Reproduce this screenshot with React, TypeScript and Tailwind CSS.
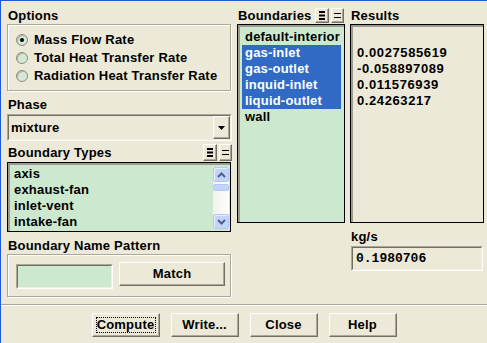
import React from "react";

const raised =
  "bg-[#ECE9D8] border border-t-white border-l-white border-b-[#716F64] border-r-[#716F64] shadow-[inset_-1px_-1px_0_#ACA899]";

function Etched({ className = "", children }: { className?: string; children?: React.ReactNode }) {
  return (
    <div className={`border border-[#ACA899] shadow-[inset_1px_1px_0_#fff,1px_1px_0_#fff] ${className}`}>
      {children}
    </div>
  );
}

function Sunken({ className = "", inner = "", children }: { className?: string; inner?: string; children?: React.ReactNode }) {
  return (
    <div className={`border border-t-[#ACA899] border-l-[#ACA899] border-b-white border-r-white ${className}`}>
      <div className={`w-full h-full border border-t-[#716F64] border-l-[#716F64] border-b-[#F1EFE2] border-r-[#F1EFE2] ${inner}`}>
        {children}
      </div>
    </div>
  );
}

function ListBox({ className = "", inner = "", children }: { className?: string; inner?: string; children?: React.ReactNode }) {
  return (
    <div className={`border border-black ${className}`}>
      <div className={`w-full h-full border-t-2 border-l-2 border-t-[#9D9B8F] border-l-[#9D9B8F] ${inner}`}>{children}</div>
    </div>
  );
}

function Radio({ checked, label }: { checked?: boolean; label: string }) {
  return (
    <div className="h-[18px] flex items-center gap-[6px]">
      <div className="w-[12px] h-[12px] rounded-full border border-[#8E8C80] bg-[#D3E8D5] shadow-[inset_1px_1px_0_#B5B3A7] flex items-center justify-center">
        {checked && <div className="w-[4px] h-[4px] rounded-full bg-black" />}
      </div>
      <span className="leading-[16px]">{label}</span>
    </div>
  );
}

function MultiIcon() {
  return (
    <svg width="6" height="9" viewBox="0 0 6 9">
      <rect x="0" y="0" width="6" height="2" fill="#000" />
      <rect x="0" y="3.5" width="6" height="2" fill="#000" />
      <rect x="0" y="7" width="6" height="2" fill="#000" />
    </svg>
  );
}

function EqIcon() {
  return (
    <svg width="7" height="5" viewBox="0 0 7 5">
      <rect x="0" y="0" width="7" height="1" fill="#000" />
      <rect x="0" y="4" width="7" height="1" fill="#000" />
    </svg>
  );
}

function ToolButtons({ h }: { h: string }) {
  return (
    <div className="flex gap-[2px]">
      <div className={`${raised} w-[14px] ${h} flex items-center justify-center`}>
        <MultiIcon />
      </div>
      <div className={`${raised} w-[13px] ${h} flex items-center justify-center`}>
        <EqIcon />
      </div>
    </div>
  );
}

function ScrollBtn({ up }: { up?: boolean }) {
  return (
    <div className="h-[15px] w-full rounded-[2px] border border-[#B4C6F2] bg-[#C3D4FC] shadow-[inset_1px_1px_0_#E6EEFF] flex items-center justify-center">
      <svg width="9" height="6" viewBox="0 0 9 6">
        <path d={up ? "M1 5 L4.5 1.5 L8 5" : "M1 1 L4.5 4.5 L8 1"} stroke="#4D6185" strokeWidth="2" fill="none" />
      </svg>
    </div>
  );
}

function PushButton({ label, focus }: { label: string; focus?: boolean }) {
  return (
    <div className={`${raised} relative w-[68px] h-[24px] flex items-center justify-center`}>
      <span className="leading-[16px]">{label}</span>
      {focus && <div className="absolute inset-[3px] border border-dotted border-black" />}
    </div>
  );
}

export default function App() {
  const boundaries = [
    { n: "default-interior", s: false },
    { n: "gas-inlet", s: true },
    { n: "gas-outlet", s: true },
    { n: "inquid-inlet", s: true },
    { n: "liquid-outlet", s: true },
    { n: "wall", s: false },
  ];
  const results = ["", "0.0027585619", "-0.058897089", "0.011576939", "0.24263217"];
  return (
    <div className="w-[487px] h-[343px] bg-[#ECE9D8] border-t border-l border-[#1F5BD8] box-border overflow-hidden flex flex-col font-['Liberation_Sans',Arial,sans-serif] font-bold text-[13px] text-black tracking-[0.2px]">
      <div className="h-[303px] flex pl-[6px] pt-[6px]">
        {/* Left column */}
        <div className="w-[225px] flex flex-col">
          <div className="h-[17px] flex items-center pl-[1px]">Options</div>
          <Etched className="h-[67px] w-[224px] pt-[6px] pl-[8px]">
            <Radio checked label="Mass Flow Rate" />
            <Radio label="Total Heat Transfer Rate" />
            <Radio label="Radiation Heat Transfer Rate" />
          </Etched>
          <div className="mt-[6px] h-[16px] flex items-center pl-[1px]">Phase</div>
          <Sunken className="mt-[1px] h-[27px] w-[225px]" inner="flex items-center">
            <span className="flex-1 pl-[2px] leading-[16px] font-normal-none">mixture</span>
            <div className={`${raised} w-[17px] h-full flex items-center justify-center`}>
              <svg width="7" height="4" viewBox="0 0 7 4">
                <path d="M0 0 H7 L3.5 4 Z" fill="#000" />
              </svg>
            </div>
          </Sunken>
          <div className="mt-[2px] h-[19px] flex justify-between items-start">
            <span className="pl-[1px] leading-[19px]">Boundary Types</span>
            <div className="mt-[1px]">
              <ToolButtons h="h-[17px]" />
            </div>
          </div>
          <ListBox className="h-[70px] w-[224px]" inner="bg-[#CCE8CF] flex">
            <div className="flex-1 pl-[4px] pt-[1px]">
              {["axis", "exhaust-fan", "inlet-vent", "intake-fan"].map((t) => (
                <div key={t} className="h-[16px] leading-[16px] whitespace-nowrap">
                  {t}
                </div>
              ))}
            </div>
            <div className="w-[16px] mr-[1px] my-[2px] flex flex-col bg-gradient-to-r from-[#F3F1EC] to-[#FEFEFB]">
              <ScrollBtn up />
              <div className="mt-[2px] h-[7px] rounded-[2px] border border-[#B4C6F2] bg-[#C3D4FC]" />
              <div className="flex-1" />
              <ScrollBtn />
            </div>
          </ListBox>
          <div className="mt-[6px] h-[16px] flex items-center pl-[1px]">Boundary Name Pattern</div>
          <Etched className="h-[43px] w-[224px] flex items-start pl-[8px]">
            <Sunken className="mt-[9px] w-[97px] h-[25px]" inner="bg-[#CCE8CF]" />
            <div className="ml-[6px] mt-[7px]">
              <div className={`${raised} w-[106px] h-[24px] flex items-center justify-center`}>Match</div>
            </div>
          </Etched>
        </div>

        {/* Middle column */}
        <div className="ml-[5px] w-[108px] flex flex-col">
          <div className="h-[17px] flex justify-between items-start pr-[1px]">
            <span className="pl-[1px] leading-[17px]">Boundaries</span>
            <div className="mt-[1px]">
              <ToolButtons h="h-[15px]" />
            </div>
          </div>
          <ListBox className="h-[199px]" inner="bg-[#CCE8CF] pt-[2px] pl-[2px] pr-[3px]">
            {boundaries.map((b) => (
              <div
                key={b.n}
                className={`h-[16px] leading-[16px] pl-[3px] whitespace-nowrap ${b.s ? "bg-[#316AC5] text-white" : ""}`}
              >
                {b.n}
              </div>
            ))}
          </ListBox>
        </div>

        {/* Right column */}
        <div className="ml-[5px] w-[134px] flex flex-col">
          <div className="h-[17px] flex items-center pl-[1px]">Results</div>
          <ListBox className="h-[199px]" inner="pt-[2px] pl-[4px]">
            {results.map((r, i) => (
              <div key={i} className="h-[16px] leading-[16px] tracking-[0.6px] whitespace-nowrap">
                {r}
              </div>
            ))}
          </ListBox>
          <div className="mt-[6px] h-[16px] flex items-center pl-[1px]">kg/s</div>
          <Sunken className="mt-[1px] ml-[1px] w-[132px] h-[25px]" inner="flex items-center pl-[3px]">
            <span className="font-['Liberation_Mono',monospace] tracking-normal leading-[16px]">0.1980706</span>
          </Sunken>
        </div>
      </div>

      <div className="h-[2px] border-t border-t-[#ACA899] border-b border-b-white" />

      <div className="flex justify-center gap-[11px] pt-[7px]">
        <PushButton label="Compute" focus />
        <PushButton label="Write..." />
        <PushButton label="Close" />
        <PushButton label="Help" />
      </div>
    </div>
  );
}
